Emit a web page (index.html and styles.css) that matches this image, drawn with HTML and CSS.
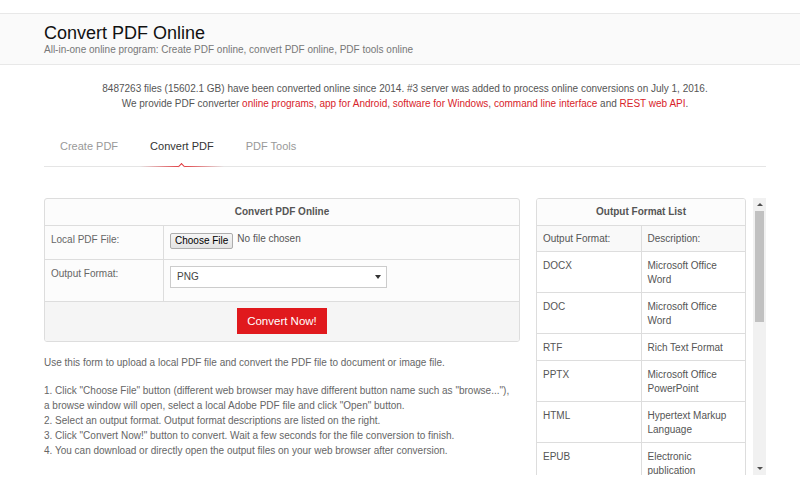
FILE: index.html
```html
<!DOCTYPE html>
<html>
<head>
    <title>Convert PDF Online</title>
    <link rel="stylesheet" href="styles.css">
</head>
<body>

<div class="site-header">
    <div class="wrap">
        <h1>Convert PDF Online</h1>
        <p class="tagline">All-in-one online program: Create PDF online, convert PDF online, PDF tools online</p>
    </div>
</div>

<div class="wrap">
    <div class="stats">
        <p>8487263 files (15602.1 GB) have been converted online since 2014. #3 server was added to process online conversions on July 1, 2016.</p>
        <p>We provide PDF converter <a href="#">online programs</a>, <a href="#">app for Android</a>, <a href="#">software for Windows</a>, <a href="#">command line interface</a> and <a href="#">REST web API</a>.</p>
    </div>

    <ul class="tabs">
        <li><a href="#">Create PDF</a></li>
        <li class="active"><a href="#">Convert PDF</a></li>
        <li><a href="#">PDF Tools</a></li>
    </ul>

    <div class="columns">
        <div class="main-col">
            <div class="form-panel">
                <div class="form-head">Convert PDF Online</div>
                <div class="form-row file-row">
                    <div class="label">Local PDF File:</div>
                    <div class="field">
                        <button class="file-btn">Choose File</button>
                        <span class="file-name">No file chosen</span>
                    </div>
                </div>
                <div class="form-row format-row">
                    <div class="label">Output Format:</div>
                    <div class="field">
                        <div class="select">PNG<span class="arrow"></span></div>
                    </div>
                </div>
                <div class="form-actions">
                    <button class="convert-btn">Convert Now!</button>
                </div>
            </div>

            <div class="help">
                <p>Use this form to upload a local PDF file and convert the PDF file to document or image file.</p>
                <p>1. Click "Choose File" button (different web browser may have different button name such as "browse..."), a browse window will open, select a local Adobe PDF file and click "Open" button.<br>
                2. Select an output format. Output format descriptions are listed on the right.<br>
                3. Click "Convert Now!" button to convert. Wait a few seconds for the file conversion to finish.<br>
                4. You can download or directly open the output files on your web browser after conversion.</p>
            </div>
        </div>

        <div class="scroll-area">
            <div class="scroll-view">
                <div class="format-panel">
                    <table class="format-table">
                        <tr class="head-row"><th colspan="2">Output Format List</th></tr>
                        <tr class="col-head"><td>Output Format:</td><td>Description:</td></tr>
                        <tr><td>DOCX</td><td>Microsoft Office Word</td></tr>
                        <tr><td>DOC</td><td>Microsoft Office Word</td></tr>
                        <tr><td>RTF</td><td>Rich Text Format</td></tr>
                        <tr><td>PPTX</td><td>Microsoft Office PowerPoint</td></tr>
                        <tr><td>HTML</td><td>Hypertext Markup Language</td></tr>
                        <tr><td>EPUB</td><td>Electronic publication</td></tr>
                    </table>
                </div>
            </div>
            <div class="scrollbar">
                <div class="sb-btn sb-up"></div>
                <div class="sb-track"><div class="sb-thumb"></div></div>
                <div class="sb-btn sb-down"></div>
            </div>
        </div>
    </div>
</div>

</body>
</html>
```

FILE: styles.css
```css
body {
    margin: 0;
    font-family: "Liberation Sans", Arial, sans-serif;
    color: #555;
    background: #fff;
}
p {
    margin: 0;
}
a {
    color: #d8232a;
    text-decoration: none;
}
.wrap {
    width: 722px;
    margin-left: 44px;
}

/* header band */
.site-header {
    margin-top: 13px;
    background: #fafafa;
    border-top: 1px solid #e8e8e8;
    border-bottom: 1px solid #e8e8e8;
    padding: 9px 0 7px;
}
.site-header h1 {
    margin: 0;
    font-size: 18px;
    line-height: 21px;
    font-weight: normal;
    color: #111;
}
.tagline {
    font-size: 10px;
    line-height: 14px;
    color: #777;
    margin-top: -1px;
}

/* stats */
.stats {
    margin-top: 16px;
    text-align: center;
    font-size: 10px;
    line-height: 15px;
}

/* tabs */
.tabs {
    list-style: none;
    margin: 15px 0 0;
    padding: 0;
    display: flex;
    border-bottom: 1px solid #e5e5e5;
}
.tabs li {
    position: relative;
}
.tabs a {
    display: block;
    padding: 13px 16px 12px;
    font-size: 11px;
    line-height: 15px;
    color: #999;
}
.tabs .active a {
    color: #333;
}
.tabs .active::after {
    content: "";
    position: absolute;
    left: 6px;
    right: 6px;
    bottom: -1px;
    height: 1px;
    background: linear-gradient(to right, rgba(224,57,62,0), #e0393e 50%, rgba(224,57,62,0));
}
.tabs .active::before {
    content: "";
    position: absolute;
    left: 50%;
    bottom: -3px;
    width: 4px;
    height: 4px;
    margin-left: -3px;
    background: #fff;
    border-top: 1px solid #e0393e;
    border-left: 1px solid #e0393e;
    transform: rotate(45deg);
    z-index: 1;
}

/* layout */
.columns {
    display: flex;
    gap: 16px;
    margin-top: 31px;
}
.main-col {
    width: 476px;
}

/* conversion form */
.form-panel {
    border: 1px solid #ddd;
    border-radius: 3px;
    overflow: hidden;
    background: #fcfcfc;
    font-size: 10px;
    line-height: 14px;
}
.form-head {
    height: 27px;
    box-sizing: border-box;
    border-bottom: 1px solid #ddd;
    display: flex;
    align-items: center;
    justify-content: center;
    font-weight: bold;
    color: #555;
}
.form-row {
    display: grid;
    grid-template-columns: 119px 1fr;
    box-sizing: border-box;
    border-bottom: 1px solid #ddd;
}
.file-row {
    height: 34px;
}
.format-row {
    height: 42px;
}
.form-row .label {
    border-right: 1px solid #ddd;
    padding: 7px 0 0 6px;
    color: #666;
}
.file-row .field {
    padding: 7px 0 0 6px;
    display: flex;
    align-items: flex-start;
}
.format-row .field {
    padding: 6px 0 0 6px;
}
.file-btn {
    font-family: inherit;
    font-size: 10px;
    line-height: 14px;
    height: 16px;
    color: #000;
    padding: 0 4px;
    margin: 0;
    border: 1px solid #adadad;
    border-radius: 2px;
    background: linear-gradient(#f6f6f6, #e3e3e3);
}
.file-name {
    margin-left: 4px;
    line-height: 12px;
}
.select {
    width: 217px;
    height: 22px;
    box-sizing: border-box;
    line-height: 20px;
    padding: 0 6px;
    border: 1px solid #ccc;
    background: #fff;
    color: #444;
    position: relative;
}
.select .arrow {
    position: absolute;
    right: 5px;
    top: 8px;
    border-left: 3px solid transparent;
    border-right: 3px solid transparent;
    border-top: 4px solid #333;
}
.form-actions {
    height: 39px;
    box-sizing: border-box;
    padding-top: 6px;
    text-align: center;
    background: #f5f5f5;
}
.convert-btn {
    font-family: inherit;
    font-size: 11.5px;
    color: #fff;
    background: #e0191d;
    border: none;
    width: 90px;
    height: 26px;
    padding: 0;
}

/* instructions */
.help {
    margin-top: 13px;
    padding-right: 6px;
    font-size: 10px;
    line-height: 15px;
    color: #666;
}
.help p + p {
    margin-top: 13px;
}

/* format list with its scrollbar */
.scroll-area {
    display: flex;
    width: 230px;
    height: 277px;
}
.scroll-view {
    width: 217px;
    overflow: hidden;
}
.format-panel {
    width: 210px;
    box-sizing: border-box;
    border: 1px solid #ddd;
    border-radius: 3px;
    overflow: hidden;
}
.format-table {
    width: 100%;
    border-collapse: collapse;
    font-size: 10px;
    line-height: 14px;
}
.format-table th {
    height: 26px;
    padding: 0;
    border-bottom: 1px solid #ddd;
    background: #fcfcfc;
    color: #555;
    font-weight: bold;
    text-align: center;
}
.format-table td {
    width: 50%;
    vertical-align: top;
    padding: 7px 12px 5px 6px;
    border-top: 1px solid #ddd;
    background: #fff;
}
.format-table td + td {
    border-left: 1px solid #ddd;
}
.format-table .col-head td {
    border-top: none;
    background: #f9f9f9;
    padding: 6px 6px 5px;
}
.scrollbar {
    width: 13px;
    display: flex;
    flex-direction: column;
    background: #f1f1f1;
}
.sb-btn {
    height: 13px;
    display: flex;
    align-items: center;
    justify-content: center;
}
.sb-up::before,
.sb-down::before {
    content: "";
    border-left: 3px solid transparent;
    border-right: 3px solid transparent;
}
.sb-up::before {
    border-bottom: 3px solid #505050;
}
.sb-down::before {
    border-top: 3px solid #505050;
}
.sb-track {
    flex: 1;
}
.sb-thumb {
    height: 111px;
    margin: 0 2px;
    background: #c1c1c1;
}
```
